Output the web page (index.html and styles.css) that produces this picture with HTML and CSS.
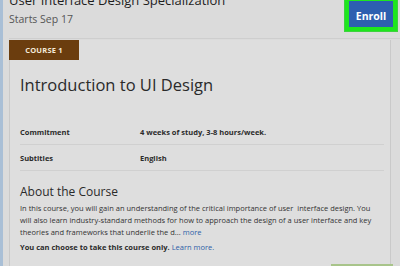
FILE: index.html
```html
<!DOCTYPE html>
<html lang="en">
<head>
  <meta charset="UTF-8" />
  <meta name="viewport" content="width=device-width, initial-scale=1.0"/>
  <title>User Interface Design Specialization</title>
  <link rel="stylesheet" href="styles.css">
</head>
<body>
  <div class="page">
    <div class="header">
      <div class="header-text">
        <h1>User Interface Design Specialization</h1>
        <p class="starts">Starts Sep 17</p>
      </div>
      <div class="enroll-wrap">
        <button class="enroll">Enroll</button>
      </div>
    </div>

    <div class="card">
      <div class="tab">COURSE 1</div>
      <div class="card-body">
        <h2>Introduction to UI Design</h2>

        <div class="info-row">
          <span class="info-label">Commitment</span>
          <span class="info-value">4 weeks of study, 3-8 hours/week.</span>
        </div>
        <div class="info-row">
          <span class="info-label">Subtitles</span>
          <span class="info-value">English</span>
        </div>

        <h3>About the Course</h3>
        <p class="about">In this course, you will gain an understanding of the critical importance of user&nbsp; interface design. You will also learn industry-standard methods for how to approach the design of a user interface and key theories and frameworks that underlie the d... <a href="#">more</a></p>
        <p class="only"><strong>You can choose to take this course only.</strong> <a href="#">Learn more.</a></p>
      </div>
    </div>
  </div>
  <div class="bottom-bar"></div>
</body>
</html>
```

FILE: styles.css
```css
html,
body {
  height: 266px;
  overflow: hidden;
}

body {
  margin: 0;
  font-family: "Open Sans", "Liberation Sans", sans-serif;
  background-color: #dbdbdb;
  color: #2b2b2b;
  position: relative;
  border-left: 3px solid #a9bfd6;
}

.page {
  width: 382px;
  padding-left: 6px;
}

.header {
  display: flex;
  justify-content: space-between;
  height: 38px;
  border-bottom: 1px solid #cecece;
  margin-right: -12px;
}

.header-text h1 {
  margin: -8px 0 0;
  font-size: 13px;
  font-weight: 400;
  line-height: 16px;
  white-space: nowrap;
  color: #1e1e1e;
}

.starts {
  margin: 4px 0 0;
  font-size: 10.5px;
  line-height: 14px;
  color: #555;
}

.enroll-wrap {
  margin-top: -4px;
  margin-right: 5px;
  height: 36px;
  padding: 4px;
  box-sizing: border-box;
  background-color: #1ee61e;
  border: 1px solid #3ed23e;
}

.enroll {
  height: 100%;
  width: 44px;
  border: none;
  background-color: #2d5fb0;
  color: #fff;
  font-family: inherit;
  font-weight: 700;
  font-size: 10.5px;
  padding: 4px 0 0;
}

.card {
  margin-top: 1px;
  border: 1px solid #c9c9c9;
  border-top: none;
  background-color: #dedede;
  height: 226px;
}

.tab {
  width: 70px;
  height: 20px;
  margin-left: -1px;
  background-color: #6b3d0e;
  color: #f4ead8;
  font-size: 7.5px;
  font-weight: 700;
  letter-spacing: 0.2px;
  text-align: center;
  line-height: 20px;
}

.card-body {
  padding: 0 6px 0 10px;
}

h2 {
  margin: 12px 0 0;
  font-size: 16.5px;
  font-weight: 400;
  line-height: 26px;
  color: #2a2a2a;
}

.info-row {
  display: flex;
  height: 25px;
  align-items: center;
  border-bottom: 1px solid #d0d0d0;
  font-size: 7.5px;
  font-weight: 700;
}

.info-row:first-of-type {
  margin-top: 21px;
}

.info-label {
  width: 120px;
}

h3 {
  margin: 12px 0 0;
  font-size: 12px;
  font-weight: 400;
  line-height: 18px;
  color: #2a2a2a;
}

.about {
  margin: 1px 0 0;
  padding-right: 9px;
  font-size: 7.5px;
  line-height: 12px;
  color: #333;
}

.only {
  margin: 3px 0 0;
  font-size: 7.5px;
  line-height: 12px;
}

a {
  color: #2e5ea8;
  text-decoration: none;
}

.bottom-bar {
  position: absolute;
  left: 328px;
  bottom: 0;
  width: 62px;
  height: 2px;
  background-color: #a8c48a;
}
```
